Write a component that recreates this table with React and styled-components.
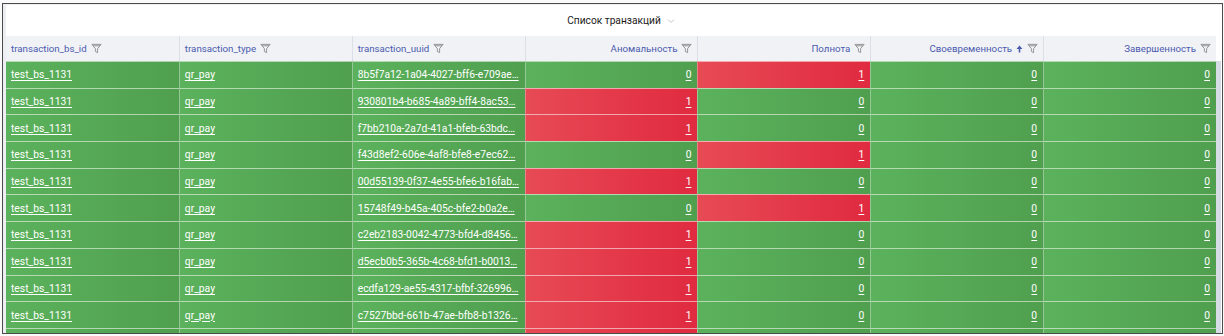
import React from 'react'
import styled, { createGlobalStyle } from 'styled-components'

const GlobalStyle = createGlobalStyle`
  html, body {
    margin: 0;
    padding: 0;
    background: #fafafa;
    font-family: Roboto, "Noto Sans", sans-serif;
  }
`

const Frame = styled.div`
  margin: 3px 1px 0 2px;
  height: 331px;
  border: 1px solid #4b4b4b;
  background: #eceef1;
  padding: 1px 0 0 3px;
  box-sizing: border-box;
  display: flex;
  flex-direction: column;
  overflow: hidden;
`

const Panel = styled.div`
  flex: 1;
  background: #fff;
  display: flex;
  flex-direction: column;
  overflow: hidden;
`

const TitleBar = styled.div`
  height: 31px;
  flex-shrink: 0;
  display: flex;
  align-items: center;
  justify-content: center;
  gap: 6px;
  font-size: 10.2px;
  color: #1a1a1a;
  padding-left: 14px;
`

const Body = styled.div`
  display: flex;
  flex: 1;
  overflow: hidden;
`

const Table = styled.div`
  width: 1210px;
  display: grid;
  grid-template-columns: repeat(7, 1fr);
  grid-auto-rows: 26.7px;
  grid-template-rows: 25px;
  align-content: start;
`

const Track = styled.div`
  width: 5px;
  margin-top: 25px;
  background: #d6dce6;
`

const HeadCell = styled.div`
  background: #f1f2f6;
  border-left: 1px solid #dcdfe7;
  display: flex;
  align-items: center;
  justify-content: ${p => (p.$num ? 'flex-end' : 'flex-start')};
  gap: 4px;
  padding: 0 5px;
  font-size: 9.7px;
  color: #4a5aae;
  white-space: nowrap;
  &:first-child { border-left: none; }
`

const Cell = styled.div`
  background: ${p =>
    p.$bad
      ? 'linear-gradient(to right, #e74a55, #e02a40)'
      : 'linear-gradient(to right, #5cb25c, #4f9f4f)'};
  border-top: 1px solid rgba(255, 255, 255, 0.55);
  border-left: 1px solid rgba(255, 255, 255, 0.4);
  display: flex;
  align-items: center;
  justify-content: ${p => (p.$num ? 'flex-end' : 'flex-start')};
  padding: 0 6px 0 5px;
  min-width: 0;
  overflow: hidden;
  white-space: nowrap;
  font-size: 10.3px;
  color: #fff;
  text-decoration: underline;
  text-underline-offset: 2px;
  &:nth-child(7n + 1) { border-left: none; }
`

const Filter = () => (
  <svg width="11" height="11" viewBox="0 0 12 12" fill="none" stroke="#8c8c8c" strokeWidth="1">
    <path d="M1 1.5h10L7.2 6.2v4.3L4.8 9.3V6.2z" />
    <path d="M2.3 3h7.4" />
  </svg>
)

const Chevron = () => (
  <svg width="8" height="6" viewBox="0 0 8 6" fill="none" stroke="#c4c4c4" strokeWidth="1">
    <path d="M1 1.5l3 3 3-3" />
  </svg>
)

const SortUp = () => (
  <svg width="7" height="8" viewBox="0 0 7 8" fill="#4a5aae">
    <path d="M3.5 0.5L6.5 4H4.3v3.5H2.7V4H0.5z" />
  </svg>
)

const columns = [
  { title: 'transaction_bs_id' },
  { title: 'transaction_type' },
  { title: 'transaction_uuid' },
  { title: 'Аномальность', num: true },
  { title: 'Полнота', num: true },
  { title: 'Своевременность', num: true, sorted: true },
  { title: 'Завершенность', num: true },
]

const rows = [
  ['8b5f7a12-1a04-4027-bff6-e709ae…', 0, 1],
  ['930801b4-b685-4a89-bff4-8ac53…', 1, 0],
  ['f7bb210a-2a7d-41a1-bfeb-63bdc…', 1, 0],
  ['f43d8ef2-606e-4af8-bfe8-e7ec62…', 0, 1],
  ['00d55139-0f37-4e55-bfe6-b16fab…', 1, 0],
  ['15748f49-b45a-405c-bfe2-b0a2e…', 0, 1],
  ['c2eb2183-0042-4773-bfd4-d8456…', 1, 0],
  ['d5ecb0b5-365b-4c68-bfd1-b0013…', 1, 0],
  ['ecdfa129-ae55-4317-bfbf-326996…', 1, 0],
  ['c7527bbd-661b-47ae-bfb8-b1326…', 1, 0],
  ['a1c0e7d2-3b19-4f0e-bfa7-92d1c…', 1, 0],
]

export default function App() {
  return (
    <>
      <GlobalStyle />
      <Frame>
        <Panel>
          <TitleBar>
            Список транзакций
            <Chevron />
          </TitleBar>
          <Body>
            <Table>
              {columns.map(c => (
                <HeadCell key={c.title} $num={c.num}>
                  {c.title}
                  {c.sorted && <SortUp />}
                  <Filter />
                </HeadCell>
              ))}
              {rows.map((r, i) => (
                <React.Fragment key={i}>
                  <Cell>test_bs_1131</Cell>
                  <Cell>qr_pay</Cell>
                  <Cell>{r[0]}</Cell>
                  <Cell $num $bad={r[1] === 1}>{r[1]}</Cell>
                  <Cell $num $bad={r[2] === 1}>{r[2]}</Cell>
                  <Cell $num>0</Cell>
                  <Cell $num>0</Cell>
                </React.Fragment>
              ))}
            </Table>
            <Track />
          </Body>
        </Panel>
      </Frame>
    </>
  )
}
